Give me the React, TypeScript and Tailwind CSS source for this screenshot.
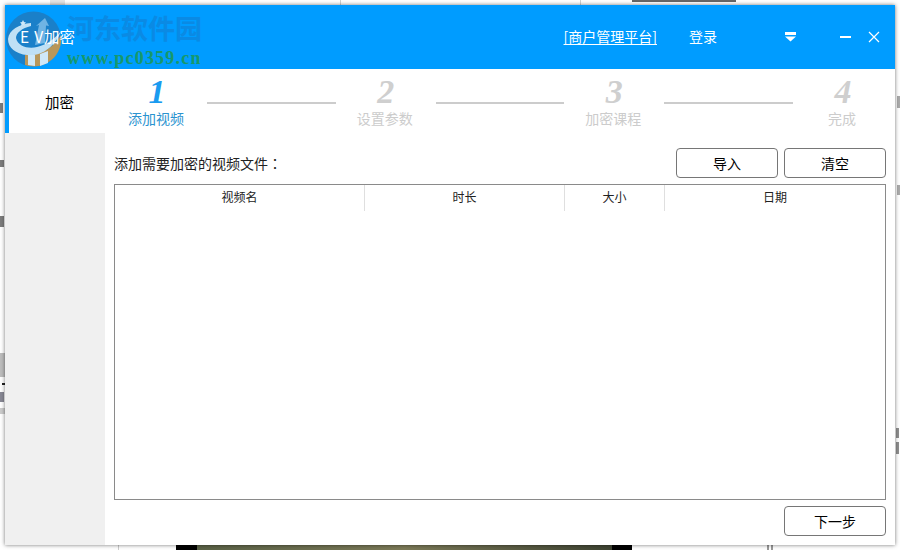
const cjk = { fontFamily: '"Noto Sans CJK SC", "Noto Sans", sans-serif' };

const steps = [
  { n: "1", label: "添加视频", active: true },
  { n: "2", label: "设置参数", active: false },
  { n: "3", label: "加密课程", active: false },
  { n: "4", label: "完成", active: false },
];

const columns = [
  { name: "视频名", width: "w-[250px]" },
  { name: "时长", width: "w-[200px]" },
  { name: "大小", width: "w-[100px]" },
  { name: "日期", width: "flex-1" },
];

function Logo() {
  return (
    <svg className="absolute left-[5px] top-[11px]" width="58" height="56" viewBox="0 0 58 56">
      <circle cx="28.5" cy="28" r="27.5" fill="#1a80c9" />
      <path d="M20 54 A27.5 27.5 0 0 0 56 24 C50 36 36 44 20 44 Z" fill="#b8975a" />
      <path
        d="M3 28 C4 19 14 13 26 12 L26 15 C17 17 11 22 11 27 C13 36 24 38 32 36 C41 34 50 28 56 20 C50 36 36 46 22 44 C11 43 3 37 3 28 Z"
        fill="#bfe0f5"
      />
      <path d="M30 34 L34 14 L31 15 L40 7 L44 15 L41 14.5 L40 32 Z" fill="#6fb4e4" />
      <path d="M23 44 L30 44 L30 55 L23 54 Z" fill="#cfe8f8" />
      <path d="M35 43 L43 40 L43 52 L35 55 Z" fill="#cfe8f8" />
      <path d="M18 9 L19 11 L21 11.5 L19.5 13 L20 15 L18 14 L16 15 L16.5 13 L15 11.5 L17 11 Z" fill="#cfe8f8" />
    </svg>
  );
}

function Backdrop() {
  return (
    <>
      <div className="absolute left-[50px] top-0 h-[5px] w-[15px] bg-[#e4e4e4]" />
      <div className="absolute left-[340px] top-0 h-[5px] w-px bg-[#d0d0d0]" />
      <div className="absolute left-[580px] top-0 h-[5px] w-px bg-[#d0d0d0]" />
      <div className="absolute left-[632px] top-0 h-[2px] w-[104px] bg-[#666]" />
      <div className="absolute left-0 top-[103px] h-[10px] w-[3px] bg-[#444] opacity-70" />
      <div className="absolute left-0 top-[160px] h-[7px] w-[4px] bg-[#444] opacity-70" />
      <div className="absolute left-0 top-[216px] h-[11px] w-[4px] bg-[#444] opacity-70" />
      <div className="absolute left-0 top-[353px] h-[24px] w-[5px] bg-[#bdbdbd]" />
      <div className="absolute left-[2px] top-[383px] h-[2px] w-[3px] bg-[#222]" />
      <div className="absolute left-0 top-[392px] h-[10px] w-[4px] bg-[#556] opacity-70" />
      <div className="absolute left-0 top-[408px] h-[6px] w-[5px] bg-[#ccc]" />
      <div className="absolute left-[118px] top-[545px] h-[5px] w-px bg-[#ccc]" />
      <div className="absolute left-[176px] top-[545px] h-[5px] w-[21px] bg-black" />
      <div className="absolute left-[197px] top-[545px] h-[5px] w-[415px] bg-gradient-to-r from-[#5a6246] via-[#7c7a58] to-[#3f4433]" />
      <div className="absolute left-[612px] top-[545px] h-[5px] w-[20px] bg-black" />
      <div className="absolute left-[767px] top-[545px] h-[5px] w-[2px] bg-[#999]" />
      <div className="absolute left-[771px] top-[545px] h-[5px] w-[2px] bg-[#999]" />
      <div className="absolute left-[896px] top-[428px] h-[10px] w-[3px] bg-[#444] opacity-60" />
      <div className="absolute left-[896px] top-[442px] h-[12px] w-[3px] bg-[#444] opacity-60" />
      <div className="absolute left-[897px] top-[96px] h-[12px] w-[3px] bg-[#555] opacity-50" />
      <div className="absolute left-[897px] top-[185px] h-[10px] w-[3px] bg-[#555] opacity-50" />
    </>
  );
}

function ActionButton({ children }: { children: string }) {
  return (
    <button className="flex h-[30px] w-[102px] items-center justify-center rounded-[4px] border border-[#767676] bg-white text-sm text-black">
      {children}
    </button>
  );
}

export default function App() {
  return (
    <div className="relative h-[550px] w-[900px] overflow-hidden bg-white p-[5px]" style={cjk}>
      <Backdrop />
      <div className="relative flex h-[540px] w-[890px] flex-col bg-white shadow-[0_0_4px_rgba(0,0,0,0.55)]">
        {/* title bar */}
        <div className="flex h-[64px] shrink-0 items-center bg-[#009cff] pl-[15px] pr-[15px] text-sm text-white">
          <span className="relative z-10 mb-[2px] text-[15.5px]">
            <span className="tracking-[5px]">E</span>
            <span className="tracking-[1px]">V</span>加密
          </span>
          <a className="mb-[2px] ml-auto underline underline-offset-2">[商户管理平台]</a>
          <span className="mb-[2px] ml-[32px]">登录</span>
          <svg className="ml-[68px]" width="11" height="10" viewBox="0 0 11 10">
            <rect x="0" y="0" width="11" height="3" fill="white" />
            <path d="M0 4.5 H11 L5.5 9.5 Z" fill="white" />
          </svg>
          <svg className="ml-[44px]" width="11" height="11" viewBox="0 0 11 11">
            <rect x="0" y="4" width="11" height="2" fill="white" />
          </svg>
          <svg className="ml-[17px]" width="12" height="12" viewBox="0 0 12 12">
            <path d="M1 1 L11 11 M11 1 L1 11" stroke="white" strokeWidth="1.2" />
          </svg>
        </div>

        <div className="flex min-h-0 flex-1">
          {/* side tabs */}
          <div className="flex w-[100px] shrink-0 flex-col bg-[#f0f0f0]">
            <div className="flex h-[64px] bg-[#009cff] pl-[4px]">
              <div className="flex flex-1 items-center justify-center bg-white pt-[1px] pl-[5px] text-[14.5px] text-black">加密</div>
            </div>
          </div>

          <div className="flex min-w-0 flex-1 flex-col">
            {/* wizard steps */}
            <div className="flex h-[64px] shrink-0 items-start px-[2px]">
              {steps.map((s, i) => (
                <div key={s.n} className="contents">
                  {i > 0 && <div className="mt-[33px] h-[2px] flex-1 bg-[#cccccc]" />}
                  <div className="flex w-[100px] shrink-0 flex-col items-center">
                    <span
                      className={`mt-[5px] h-[34px] text-[34px] leading-[36px] font-bold italic ${s.active ? "text-[#1a9bf0]" : "text-[#cfcfcf]"}`}
                      style={{ fontFamily: '"Liberation Serif", serif' }}
                    >
                      {s.n}
                    </span>
                    <span className={`-translate-x-px text-sm leading-[20px] ${s.active ? "text-[#2b93cf]" : "text-[#cccccc]"}`}>
                      {s.label}
                    </span>
                  </div>
                </div>
              ))}
            </div>

            {/* file list */}
            <div className="flex min-h-0 flex-1 flex-col px-[9px] pt-[15px] pb-[9px]">
              <div className="flex items-center justify-between">
                <span className="text-sm text-[#222]">
                  添加需要加密的视频文件<span style={{ fontFamily: '"Noto Sans CJK TC", sans-serif' }}>：</span>
                </span>
                <div className="flex gap-[6px]">
                  <ActionButton>导入</ActionButton>
                  <ActionButton>清空</ActionButton>
                </div>
              </div>
              <div className="mt-[6px] min-h-0 flex-1 border border-[#8a8a8a]">
                <div className="flex h-[26px] text-xs text-[#222]">
                  {columns.map((c, i) => (
                    <div
                      key={c.name}
                      className={`flex items-center justify-center pb-[2px] ${c.width} ${i < 3 ? "border-r border-[#dfdfdf]" : ""}`}
                    >
                      {c.name}
                    </div>
                  ))}
                </div>
              </div>
              <div className="mt-[6px] flex justify-end">
                <ActionButton>下一步</ActionButton>
              </div>
            </div>
          </div>
        </div>
      </div>

      {/* site watermark over the window */}
      <Logo />
      <div className="absolute left-[67px] top-[12px] flex flex-col" style={{ fontFamily: '"Liberation Serif", "Noto Sans CJK SC", serif' }}>
        <span className="text-[27px] leading-[36px] font-bold text-[#0a8ae4]">河东软件园</span>
        <span className="text-[18px] leading-[20px] font-bold tracking-[1.2px] text-[#17986c]">www.pc0359.cn</span>
      </div>
    </div>
  );
}
